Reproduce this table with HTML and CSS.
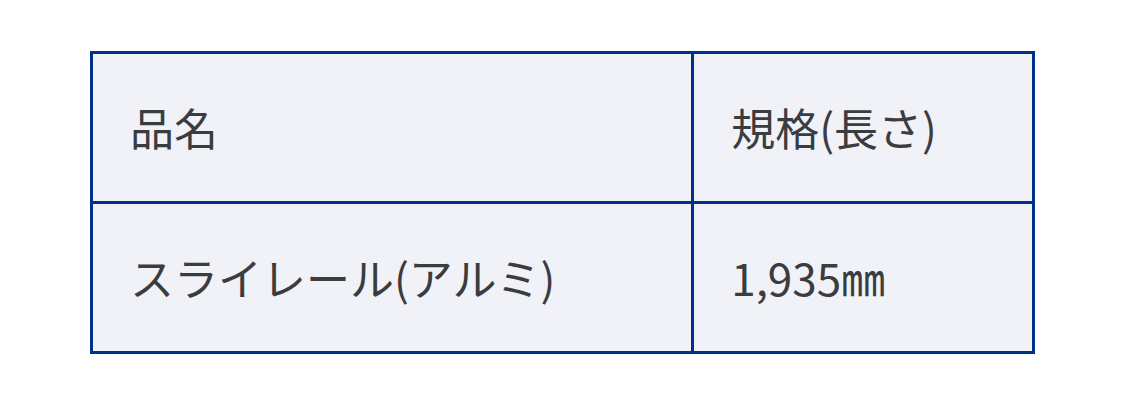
FILE: index.html
```html
<!DOCTYPE html>
<html lang="ja">
<head>
<meta charset="utf-8">
<link rel="stylesheet" href="styles.css">
</head>
<body>
<div class="wrap">
<table class="spec">
  <tr>
    <td class="c1">品名</td>
    <td class="c2">規格(長さ)</td>
  </tr>
  <tr>
    <td class="c1">スライレール(アルミ)</td>
    <td class="c2">1,935㎜</td>
  </tr>
</table>
</div>
</body>
</html>
```
FILE: styles.css
```css
html, body {
  margin: 0;
  padding: 0;
  background: #ffffff;
}
.wrap {
  padding: 51px 0 0 90px;
}
.spec {
  border-collapse: collapse;
  width: 945px;
  font-family: "Noto Sans CJK JP", "Noto Sans", sans-serif;
  font-size: 44px;
  color: #3a3c40;
}
.spec td {
  box-sizing: border-box;
  border: 3px solid #00318a;
  background: #f0f2f7;
  height: 150px;
  padding: 0 0 2px 37px;
  vertical-align: middle;
  white-space: nowrap;
}
.spec .c1 {
  width: 603px;
}
.spec .c2 {
  width: 342px;
}
```
